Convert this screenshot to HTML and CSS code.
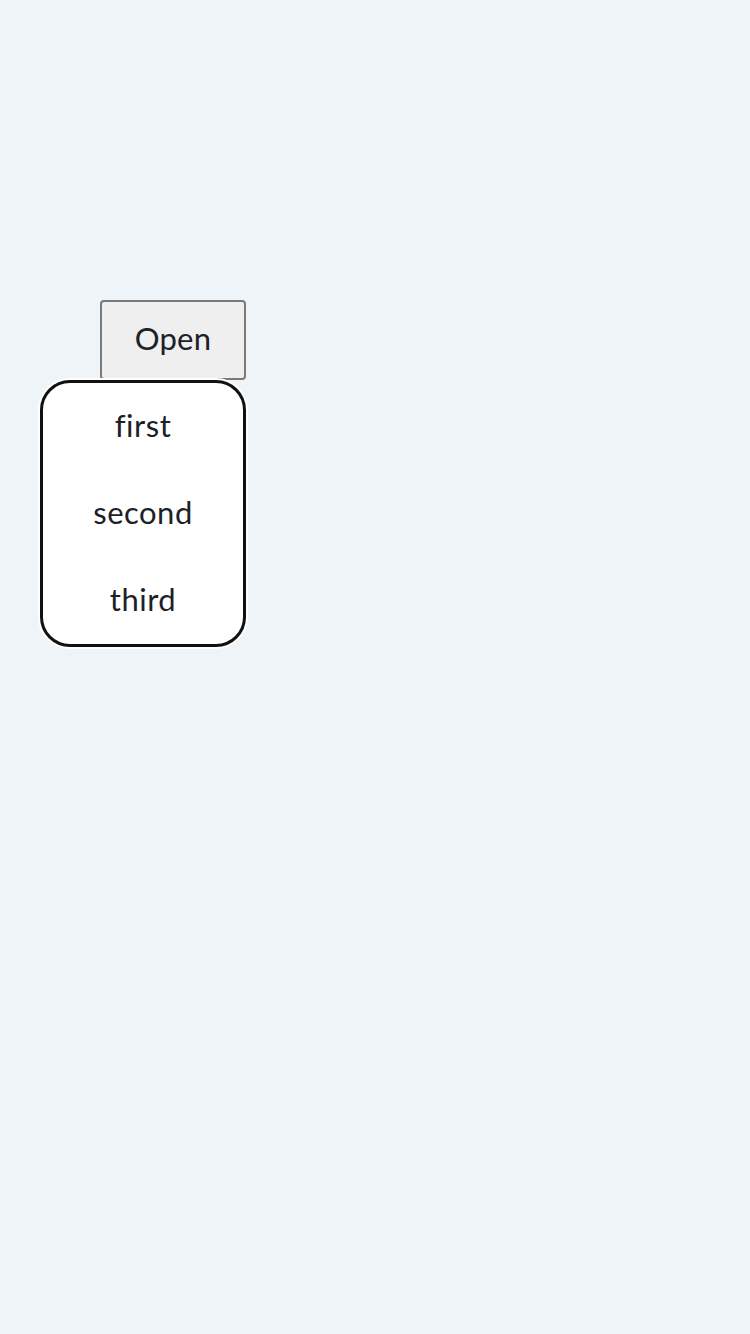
FILE: index.html
```html
<!DOCTYPE html>
<html>
<head>
<meta charset="utf-8">
<link rel="stylesheet" href="styles.css">
</head>
<body>
<div class="stage">
  <div class="anchor">
    <button class="open-btn">Open</button>
    <ul class="menu">
      <li class="item">first</li>
      <li class="item">second</li>
      <li class="item">third</li>
    </ul>
  </div>
</div>
</body>
</html>
```
FILE: styles.css
```css
html, body {
  margin: 0;
  padding: 0;
  background: #eef4f7;
  font-family: "Lato", "Noto Sans", sans-serif;
  color: #1b2127;
}
.stage {
  min-height: 1334px;
  padding: 300px 0 0 100px;
  box-sizing: border-box;
}
.anchor {
  position: relative;
  display: inline-block;
}
.open-btn {
  display: block;
  width: 146px;
  height: 80px;
  box-sizing: border-box;
  border: 2px solid #7a7a7a;
  border-radius: 4px;
  background: #efefef;
  font-family: inherit;
  font-size: 31px;
  letter-spacing: 0.3px;
  color: #1b2127;
  padding: 0 0 4px 0;
}
.menu {
  position: absolute;
  top: 100%;
  right: 0;
  width: 206px;
  box-sizing: border-box;
  margin: 0;
  padding: 0;
  list-style: none;
  background: #fff;
  border: 3px solid #111;
  border-radius: 30px;
  box-shadow: 0 0 0 2px #fff;
}
.item {
  height: 87px;
  box-sizing: border-box;
  padding-bottom: 4px;
  display: flex;
  align-items: center;
  justify-content: center;
  font-size: 31px;
  letter-spacing: 0.5px;
}
```
